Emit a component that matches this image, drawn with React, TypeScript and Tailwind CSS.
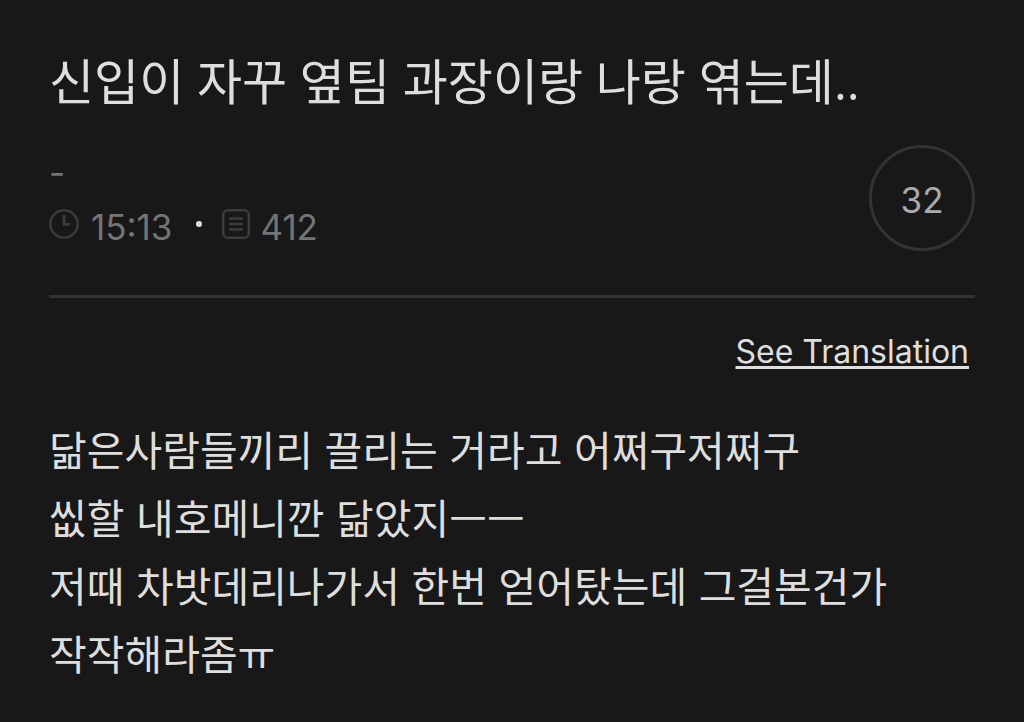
import React from 'react';

interface Post {
  title: string;
  author: string;
  time: string;
  views: number;
  score: number;
  lines: string[];
}

const post: Post = {
  title: '신입이 자꾸 옆팀 과장이랑 나랑 엮는데..',
  author: '-',
  time: '15:13',
  views: 412,
  score: 32,
  lines: [
    '닮은사람들끼리 끌리는 거라고 어쩌구저쩌구',
    '씺할 내호메니깐 닮았지ㅡㅡ',
    '저때 차밧데리나가서 한번 얻어탔는데 그걸본건가',
    '작작해라좀ㅠ',
  ],
};

const ClockIcon: React.FC = () => (
  <svg className="size-[30px]" viewBox="0 0 30 30" fill="none" stroke="#3c3c3c" aria-hidden="true">
    <circle cx="15" cy="15" r="13.7" strokeWidth="2.4" />
    <path d="M15 6v9.3h5.6" strokeWidth="2.8" />
  </svg>
);

const ViewsIcon: React.FC = () => (
  <svg className="h-[30px] w-[28px]" viewBox="0 0 28 30" fill="none" stroke="#3c3c3c" aria-hidden="true">
    <rect x="1.2" y="1.2" width="25.6" height="27.6" rx="4.5" strokeWidth="2.4" />
    <path d="M7 9.5h14M7 15h14M7 20.5h14" strokeWidth="2.4" />
  </svg>
);

const PostHeader: React.FC = () => (
  <header className="border-b-[3px] border-[#333333] pb-11">
    <h1 className="font-['Open_Sans','Noto_Sans_CJK_KR',sans-serif] text-[49px] leading-[64px]">
      {post.title}
    </h1>

    <div className="mt-8 flex items-center justify-between">
      <div className="text-[35px] text-[#747474]">
        <p className="leading-[52px]">{post.author}</p>
        <div className="flex items-center leading-[46px]">
          <ClockIcon />
          <time className="ml-3 pt-1.5">{post.time}</time>
          <span className="mr-5 ml-6 size-[6px] rounded-full bg-[#dedede]" />
          <ViewsIcon />
          <span className="ml-2.5 pt-1.5">{post.views}</span>
        </div>
      </div>
      <div className="flex size-[106px] items-center justify-center rounded-full border-[3px] border-[#333333] pt-1 text-[35px] text-[#aaaaaa]">
        {post.score}
      </div>
    </div>
  </header>
);

export default function App() {
  return (
    <main
      lang="ko"
      className="min-h-screen bg-[#181818] px-[49px] pt-[49px] pb-7 font-['Inter','Noto_Sans_CJK_KR',sans-serif] text-[#dedede]"
    >
      <PostHeader />

      <div className="mt-[35px] flex justify-end pr-1.5">
        <a
          href="#translation"
          className="text-[32px] leading-[38px] underline decoration-[3px] underline-offset-[3px]"
        >
          See Translation
        </a>
      </div>

      <article className="mt-[46px] text-[41px] leading-[68px]">
        {post.lines.map((line) => (
          <p key={line}>{line}</p>
        ))}
      </article>
    </main>
  );
}
